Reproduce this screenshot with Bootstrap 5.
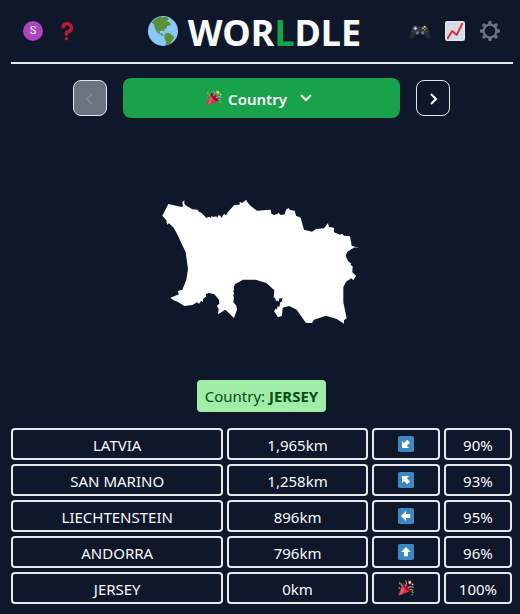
<!DOCTYPE html>
<html lang="en">
<head>
<meta charset="utf-8">
<meta name="viewport" content="width=device-width, initial-scale=1">
<title>Worldle</title>
<link rel="stylesheet" href="https://cdn.jsdelivr.net/npm/bootstrap@5.3.0/dist/css/bootstrap.min.css">
<style>
body{background:#0f172a;color:#f8fafc;font:400 15px/24px "Noto Sans",sans-serif}
.shell{max-width:520px;padding:0 7px 0 11px}
.topbar{height:64px;border-bottom:2px solid #e5e7eb;padding:0 13px 0 12px}
.side{flex:1 1 0}
.tools{gap:15px}
.account-tools{gap:14px}
.plain{background:none;border:0;padding:0;color:inherit;display:flex}
.avatar{width:20px;height:20px;background:#ab47bc;font:400 11px/20px Roboto,sans-serif;justify-content:center}
.brand{font-size:36px;line-height:40px;font-weight:700;gap:10px;padding-right:14px}
.brand .word{padding-top:4px}
.brand .hit{color:#16a34a}
.content{padding-right:1px}
.rounds{padding-top:14px;gap:16px}
.step{width:34px;height:36px;border:1px solid #e5e7eb;border-radius:8px;background:none;color:#fff;padding:0}
.step:disabled{background:#6b7280;color:#858585;border-color:#e5e7eb}
.round{width:calc(55% + 2px);height:40px;border:0;border-radius:8px;background:#18a34a;color:#fff;font-weight:600;gap:6px;padding:0 8px 0 4px}
.round .word{padding-top:2px}
.round .chev{margin-left:6px}
.shape{padding:77px 0 50px}
.answer{background:#a0eda7;color:#0b4a1a;border-radius:4px;padding:4px 8px}
.guesses{margin-top:16px}
.guesses tbody{display:grid;gap:4px}
.guesses tr{display:grid;grid-template-columns:repeat(7,minmax(0,1fr));gap:4px}
.guesses td{height:32px;border:2px solid #e5e7eb;border-radius:4px;padding:3px 0 1px;text-align:center}
.guesses td:nth-child(1){grid-column:span 3}
.guesses td:nth-child(2){grid-column:span 2}
.guesses td:nth-child(3){display:flex;justify-content:center;padding:6px 0}
svg{display:block;flex:none}
</style>
</head>
<body>
<svg width="0" height="0" class="position-absolute" aria-hidden="true">
<defs>
<symbol id="party" viewBox="0 0 36 36">
<path fill="#dd2e44" d="M11 8 1 33c-.5 1.500.5 2.500 2 2l25-10c-1-5-10-15-17-17z"/>
<path fill="#ea596e" d="M12 12 3 34l7-3c4-7 4-13 2-19z"/>
<path fill="#a0041e" d="M11 8c3-2 9 2 13 7s6 9 4 10c-4 1-9-3-13-7s-6-8-4-10z"/>
<path fill="none" stroke="#aa8dd8" stroke-width="2.500" d="M16 14c4-4 4-8 1-13M22 18c4-4 8-4 13-1"/>
<path fill="none" stroke="#77b255" stroke-width="2.500" d="M7 14c3-3 1-6-1-5-3 0-3-3-1-5M27 23c1-3 6-3 5 1-1 3 0 4 3 4"/>
<path fill="#ffcc4d" d="m23 1 3 2 3-2v4l3 2-4 1-1 3-2-3-3-1 2-2z"/>
<circle cx="33" cy="10" r="2" fill="#ffcc4d"/><circle cx="8" cy="20" r="2" fill="#5c913b"/><circle cx="32" cy="33" r="2" fill="#5c913b"/><circle cx="3" cy="18" r="2" fill="#9266cc"/>
</symbol>
<symbol id="arrow-up" viewBox="0 0 36 36">
<rect width="36" height="36" rx="4" fill="#3b88c3"/><path fill="#fff" d="M18 6.500 7 18h6.500v9.500h9V18H29z"/>
</symbol>
<symbol id="arrow-diag" viewBox="0 0 36 36">
<rect width="36" height="36" rx="4" fill="#3b88c3"/><path fill="#fff" d="M9 9v16l4.600-4.600 7.200 7.200 6.500-6.500-7.200-7.200L25 9z"/>
</symbol>
</defs>
</svg>
<div class="shell container-fluid">
<header class="topbar d-flex align-items-center">
<div class="side d-flex align-items-center account-tools">
<button class="plain avatar rounded-circle" aria-label="Account">S</button>
<button class="plain" aria-label="Help"><svg width="20" height="20" viewBox="0 0 36 36" fill="#be1931"><path d="M17 27c-1.657 0-3-1.343-3-3v-4c0-1.657 1.343-3 3-3 .603-.001 6-1 6-5 0-2-2-4-5-4-2.441 0-4 2-4 3 0 1.657-1.343 3-3 3s-3-1.343-3-3c0-4.878 4.580-9 10-9 8 0 11 5.982 11 11 0 4.145-2.277 7.313-6.413 8.920-.9.351-1.790.587-2.587.747V24c0 1.657-1.343 3-3 3z"/><circle cx="17" cy="32" r="3"/></svg></button>
</div>
<h1 class="brand d-flex align-items-center mb-0">
<svg width="30" height="30" viewBox="0 0 90 90" aria-hidden="true"><circle cx="45" cy="45" r="45" fill="#88c9f9"/><path fill="#5c913b" d="M12 19C20 9 30 3 40 1l4 4 6-3 12 3-2 8-6 3 10 2 5 8-5 3-7 1-1 7-7 3-4 6-2-3-8 3 1 7 6-2 2 5 5 4-4 1-9-6-8-5-5-8-4-8-1-9-6-4-6 1zM50 54l7-4 10 2 3 5 8 4-1 9-6 5-3 7-7 4-7 2-2-1 3-10-5-7-1-8zM68 7l6 4-4 3zM44 42l9 2-1 2-7-2z"/></svg>
<span class="word">WOR<span class="hit">L</span>DLE</span>
</h1>
<div class="side d-flex align-items-center justify-content-end tools">
<button class="plain" aria-label="Games"><svg width="20" height="20" viewBox="0 0 60 60"><path fill="#31373d" d="M3 45C3 32 5 22 9 18c4-5 12-5 15-1h12c3-4 11-4 15 1 4 4 6 14 6 27l-14-9H17z"/><path fill="#292f33" d="M2 37c4-3 12-2 16 3l-6 8c-3 5-11 6-12 0zM58 37c-4-3-12-2-16 3l6 8c3 5 11 6 12 0z"/><circle cx="16" cy="22" r="7" fill="#4b545d"/><path stroke="#ccd6dd" stroke-width="3" d="M16 17v10M11 22h10"/><circle cx="22" cy="36" r="5" fill="#66757f"/><circle cx="38" cy="36" r="5" fill="#66757f"/><circle cx="44" cy="17" r="3" fill="#ffcc4d"/><circle cx="49" cy="22" r="3" fill="#dd2e44"/><circle cx="44" cy="27" r="3" fill="#5c913b"/><circle cx="39" cy="22" r="3" fill="#55acee"/></svg></button>
<button class="plain" aria-label="Statistics"><svg width="20" height="20" viewBox="0 0 36 36"><rect width="36" height="36" rx="4" fill="#e1e8ed"/><path fill="#ccd6dd" d="M3 3h30v30H3z"/><path stroke="#e1e8ed" stroke-width="1.500" d="M9 3v30M15 3v30M21 3v30M27 3v30M3 9h30M3 15h30M3 21h30M3 27h30"/><path fill="none" stroke="#dd2e44" stroke-width="3.600" stroke-linecap="round" stroke-linejoin="round" d="m5 31 8-13 8 7L31 5"/></svg></button>
<button class="plain" aria-label="Settings"><svg width="20" height="20" viewBox="-18 -18 36 36"><g fill="#66757f"><circle r="11.500" fill="none" stroke="#66757f" stroke-width="4"/><g id="teeth"><path id="tooth" d="M-3.500-12l1-6h5l1 6zM-3.500 12l1 6h5l1-6z"/><use href="#tooth" transform="rotate(90)"/></g><use href="#teeth" transform="rotate(45)"/></g></svg></button>
</div>
</header>
<main class="content">
<div class="rounds d-flex justify-content-center align-items-center">
<button class="step d-flex align-items-center justify-content-center" disabled aria-label="Previous round"><svg width="16" height="16" viewBox="0 0 16 16" fill="none" stroke="currentColor" stroke-width="2"><path d="M10 4 5 9l5 5"/></svg></button>
<button class="round d-flex align-items-center justify-content-center"><svg width="16" height="16" aria-hidden="true"><use href="#party"/></svg><span class="word">Country</span><svg class="chev" width="14" height="14" viewBox="0 0 14 14" fill="none" stroke="currentColor" stroke-width="2"><path d="m2 4 5 5 5-5"/></svg></button>
<button class="step d-flex align-items-center justify-content-center" aria-label="Next round"><svg width="16" height="16" viewBox="0 0 16 16" fill="none" stroke="currentColor" stroke-width="2"><path d="m6 4 5 5-5 5"/></svg></button>
</div>
<div class="shape d-flex justify-content-center">
<svg width="214" height="135" viewBox="0 0 642 405" role="img" aria-label="Country outline"><path fill="#fff" d="M22 62 40 27l40 9 4-3-2-11 6-6v10l8 8 16 9 16 1 3 6 9 4 14 15 9-4 5 4 2-7 4 4 10-2 3 4 4-8 5 2 4 8 4-10 4-3 6 4 4-9 20-22 16-1v-9l7 4 13-10 2 6 11 13 19 14 41-3 2 12 8 4 10-3 4-4 6 7 12-2 4-14 8-5 4 6 14 2 4 15 14 6 10 36 24 6 12-8 24-2 12-16 3 12 15 2v14l18 7 6-3 6 6 18 2 5 28 25 8-16-3-22 13-5 12 7 16 10 8-3 4 7 4-1 18 11 10-8 14-6-6-16 10-8 16v46l10 48-8 6v10l-22-14-32-10-36 12-6 10h-18l-28-40-22-11-20 5-2 24-12 5-12-19 6-8 3 4 2-11 5 3 3-14 4-2 3-13-4 4-5-3-3 12-5-5-3 5-3-13-4 3 2-24-24-22-32-10-38 0-24 14-4 8 1 10-3 3 3 4-2 10 2 4-2 15 9 10 2 12-9 25-26-25-22 14 2-16-5-10 7-6-1-12-14-16-16-4-10 3 2 7-10 8v8l-6-2-6 8-6-4-14 8-24 3-20-13-12-4-10-8 26-10-4-10 14-4 12-30 5-32-7-50-26-56-10-18-14-13-6 4-2-13z"/></svg>
</div>
<div class="d-flex justify-content-center"><div class="answer">Country: <b>JERSEY</b></div></div>
<table class="guesses w-100" aria-label="Guesses">
<tbody class="w-100">
<tr><td>LATVIA</td><td>1,965km</td><td><svg width="16" height="16" role="img" aria-label="South west" viewBox="0 0 16 16"><use href="#arrow-diag" width="16" height="16" transform="matrix(1 0 0 -1 0 16)"/></svg></td><td>90%</td></tr>
<tr><td>SAN MARINO</td><td>1,258km</td><td><svg width="16" height="16" role="img" aria-label="North west"><use href="#arrow-diag"/></svg></td><td>93%</td></tr>
<tr><td>LIECHTENSTEIN</td><td>896km</td><td><svg width="16" height="16" role="img" aria-label="West" viewBox="0 0 16 16"><use href="#arrow-up" width="16" height="16" transform="rotate(-90 8 8)"/></svg></td><td>95%</td></tr>
<tr><td>ANDORRA</td><td>796km</td><td><svg width="16" height="16" role="img" aria-label="North"><use href="#arrow-up"/></svg></td><td>96%</td></tr>
<tr><td>JERSEY</td><td>0km</td><td><svg width="16" height="16" role="img" aria-label="Correct"><use href="#party"/></svg></td><td>100%</td></tr>
</tbody>
</table>
</main>
</div>
<script src="https://cdn.jsdelivr.net/npm/bootstrap@5.3.0/dist/js/bootstrap.bundle.min.js"></script>
</body>
</html>
